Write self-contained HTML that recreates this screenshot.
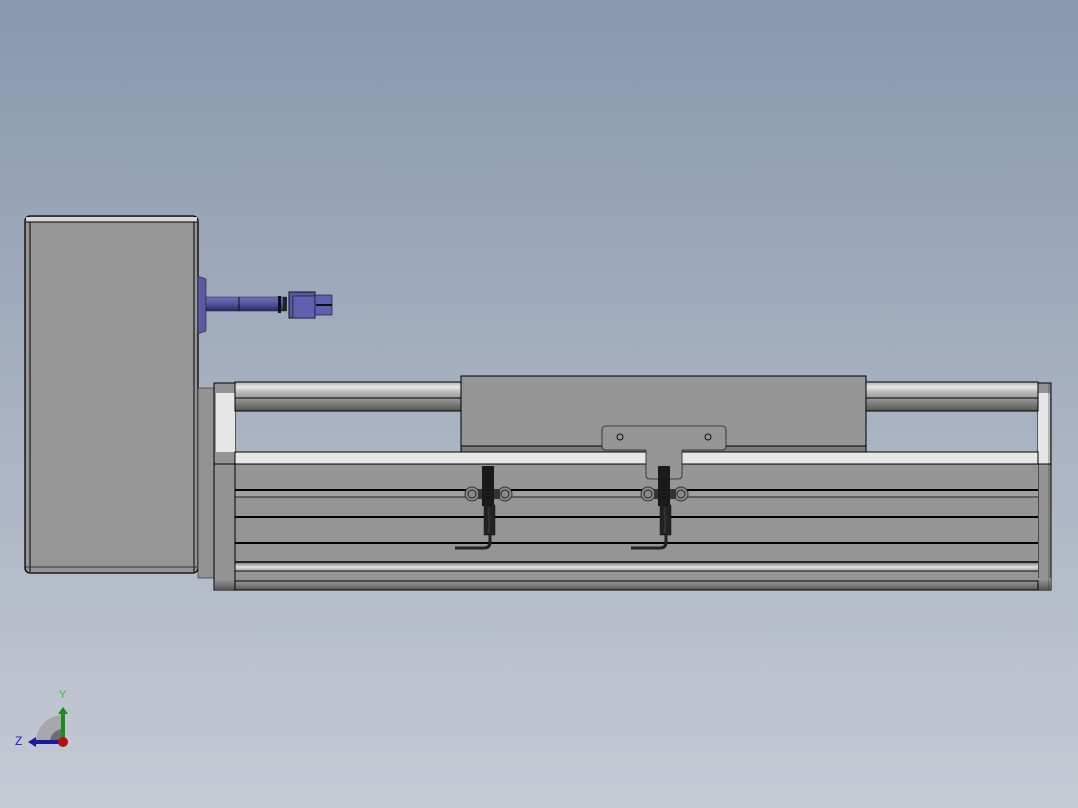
<!DOCTYPE html>
<html><head><style>
html,body{margin:0;padding:0;width:1078px;height:808px;overflow:hidden}
</style></head><body>
<svg width="1078" height="808" viewBox="0 0 1078 808" xmlns="http://www.w3.org/2000/svg">
<defs>
<linearGradient id="bg" x1="0" y1="0" x2="0" y2="1">
<stop offset="0" stop-color="#8898ad"/><stop offset="1" stop-color="#c6cad5"/></linearGradient>
<linearGradient id="rodT" x1="0" y1="0" x2="0" y2="1">
<stop offset="0" stop-color="#a9a9a9"/><stop offset="0.3" stop-color="#e8e8e8"/><stop offset="0.6" stop-color="#bdbdbd"/><stop offset="1" stop-color="#9a9a9a"/></linearGradient>
<linearGradient id="rodD" x1="0" y1="0" x2="0" y2="1">
<stop offset="0" stop-color="#9a9a9a"/><stop offset="0.5" stop-color="#7a7a7a"/><stop offset="1" stop-color="#555"/></linearGradient>
<linearGradient id="band" x1="0" y1="0" x2="0" y2="1">
<stop offset="0" stop-color="#8a8a8a"/><stop offset="0.5" stop-color="#e0e0e0"/><stop offset="1" stop-color="#a0a0a0"/></linearGradient>
<linearGradient id="blue" x1="0" y1="0" x2="0" y2="1">
<stop offset="0" stop-color="#7070b8"/><stop offset="0.4" stop-color="#5a5aa8"/><stop offset="1" stop-color="#2a2a60"/></linearGradient>
</defs>
<rect width="1078" height="808" fill="url(#bg)"/>

<!-- motor -->
<rect x="25" y="216" width="173" height="357" rx="5" fill="#969696" stroke="#000" stroke-width="1.3"/>
<rect x="26" y="217" width="171" height="5" fill="#d6d6d6"/>
<line x1="26" y1="222" x2="197" y2="222" stroke="#000"/>
<line x1="30" y1="222" x2="30" y2="572" stroke="#000"/>
<line x1="194" y1="222" x2="194" y2="572" stroke="#000"/>
<line x1="26" y1="567" x2="197" y2="567" stroke="#333"/>

<!-- flange & shaft -->
<path d="M198 276 L206 279 L206 331 L198 334 Z" fill="#5a5aa0" stroke="#222" stroke-width="0.6"/>
<rect x="206" y="297" width="80" height="14" fill="url(#blue)" stroke="#222" stroke-width="0.5"/>
<line x1="239" y1="297" x2="239" y2="311" stroke="#111"/>
<rect x="278" y="296" width="3" height="17" fill="#111"/>
<rect x="283" y="297" width="4" height="14" fill="#222"/>
<rect x="289" y="292" width="26" height="26" fill="#5858a6" stroke="#111"/>
<rect x="293" y="296" width="22" height="22" fill="#6060b0" stroke="#111" stroke-width="0.6"/>
<rect x="315" y="295" width="17" height="20" fill="#6060b0" stroke="#111" stroke-width="0.6"/>
<line x1="316" y1="305" x2="332" y2="305" stroke="#111" stroke-width="2"/>

<!-- adapter -->
<rect x="198" y="388" width="17" height="190" fill="#939393" stroke="#222" stroke-width="0.6"/>

<!-- left end plate -->
<rect x="214" y="383" width="21" height="207" fill="#939393" stroke="#000"/>
<rect x="216" y="393" width="19" height="59" fill="#e6e6e6"/>
<rect x="215" y="578" width="20" height="12" fill="url(#rodD)"/>
<!-- right end plate -->
<rect x="1038" y="383" width="13" height="207" fill="#939393" stroke="#000"/>
<rect x="1038" y="393" width="12" height="71" fill="#e6e6e6"/>
<rect x="1038" y="578" width="13" height="12" fill="url(#rodD)"/>
<line x1="1049" y1="383" x2="1049" y2="590" stroke="#444" stroke-width="0.6"/>

<!-- top rods -->
<rect x="235" y="382" width="226" height="16" fill="url(#rodT)" stroke="#000" stroke-width="1"/>
<rect x="235" y="398" width="226" height="13" fill="url(#rodD)" stroke="#000" stroke-width="1"/>
<rect x="866" y="382" width="172" height="16" fill="url(#rodT)" stroke="#000" stroke-width="1"/>
<rect x="866" y="398" width="172" height="13" fill="url(#rodD)" stroke="#000" stroke-width="1"/>

<!-- carriage -->
<rect x="461" y="376" width="405" height="76" fill="#959595" stroke="#000"/>
<rect x="461" y="446" width="405" height="6" fill="#7a7a7a" stroke="#000" stroke-width="1"/>

<!-- white strip -->
<rect x="235" y="452" width="803" height="12" fill="#e6e6e6" stroke="#000" stroke-width="1"/>

<!-- body -->
<rect x="235" y="464" width="803" height="126" fill="#959595"/>
<line x1="214" y1="464" x2="1051" y2="464" stroke="#000"/>
<line x1="235" y1="490" x2="1038" y2="490" stroke="#000" stroke-width="2"/>
<rect x="235" y="491" width="803" height="6" fill="#a0a0a0"/>
<line x1="235" y1="497" x2="1038" y2="497" stroke="#222"/>
<line x1="235" y1="517" x2="1038" y2="517" stroke="#000" stroke-width="2"/>
<line x1="235" y1="543" x2="1038" y2="543" stroke="#000" stroke-width="2"/>
<line x1="235" y1="562" x2="1038" y2="562" stroke="#000" stroke-width="1.5"/>
<rect x="235" y="563" width="803" height="8" fill="url(#band)"/>
<line x1="235" y1="571" x2="1038" y2="571" stroke="#111"/>
<rect x="235" y="581" width="803" height="9" fill="url(#rodD)" stroke="#000" stroke-width="1"/>
<line x1="235" y1="452" x2="235" y2="590" stroke="#000"/>

<!-- bracket -->
<path d="M606 426 H722 Q726 426 726 430 V446 Q726 450 722 450 H682 V475 Q682 479 678 479 H650 Q646 479 646 475 V450 H606 Q602 450 602 446 V430 Q602 426 606 426 Z" fill="#959595" stroke="#222" stroke-width="0.8"/>
<circle cx="620" cy="437" r="3" fill="#959595" stroke="#111"/>
<circle cx="708" cy="437" r="3" fill="#959595" stroke="#111"/>

<!-- sensors -->
<g id="s1">
<circle cx="472" cy="494" r="7" fill="#8a8a8a" stroke="#333"/>
<circle cx="472" cy="494" r="4" fill="none" stroke="#222"/>
<circle cx="505" cy="494" r="7" fill="#8a8a8a" stroke="#333"/>
<circle cx="505" cy="494" r="4" fill="none" stroke="#222"/>
<rect x="478" y="489" width="22" height="10" fill="#333"/>
<rect x="482" y="466" width="12" height="40" fill="#1a1a1a"/>
<rect x="484" y="505" width="11" height="30" fill="#222" stroke="#111" stroke-width="0.5"/>
<line x1="489" y1="507" x2="489" y2="533" stroke="#555" stroke-width="0.6"/>
<path d="M490 535 V542 Q490 548 484 548 H455" fill="none" stroke="#222" stroke-width="3"/>
</g>
<use href="#s1" x="176"/>

<!-- triad -->
<path d="M36 742 A27 27 0 0 1 63 715 L63 742 Z" fill="#a8a8aa"/>
<path d="M50 742 A13 13 0 0 1 63 729 L63 742 Z" fill="#6e6e70"/>
<rect x="61" y="713" width="4" height="28" fill="#1f8a1f"/>
<path d="M58 714 L63 707 L68 714 Z" fill="#1f8a1f"/>
<rect x="35" y="740" width="26" height="4" fill="#1a1aa0"/>
<path d="M36 737 L28 742 L36 747 Z" fill="#1a1aa0"/>
<circle cx="63" cy="742" r="5" fill="#b01010"/>
<text x="59" y="698" font-family="Liberation Sans, sans-serif" font-size="11" fill="#22cc22">Y</text>
<text x="15" y="745" font-family="Liberation Sans, sans-serif" font-size="12" fill="#1a1ad0">Z</text>
</svg>
</body></html>
